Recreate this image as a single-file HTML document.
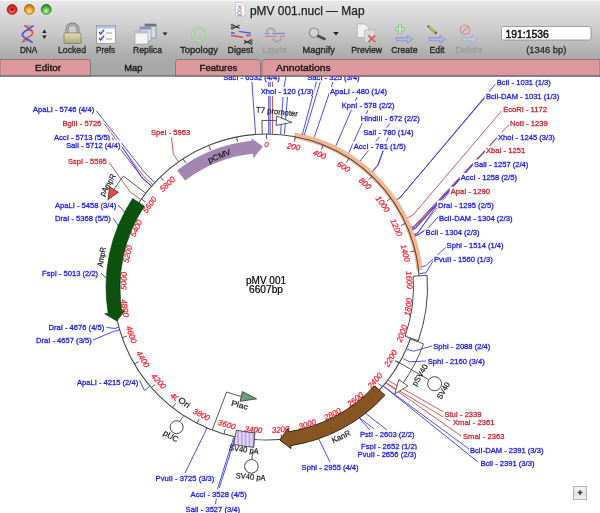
<!DOCTYPE html>
<html><head><meta charset="utf-8">
<style>
html,body{margin:0;padding:0;width:600px;height:513px;overflow:hidden;background:#fff;font-family:"Liberation Sans",sans-serif;}
#map{position:absolute;left:0;top:0;width:600px;height:513px;will-change:transform;}
#chrome{position:absolute;left:0;top:0;width:600px;height:77px;will-change:transform;}
</style></head><body>
<svg id="map" width="600" height="513" viewBox="0 0 600 513" font-family="Liberation Sans, sans-serif">
<path d="M294.32,135.53 A154,154 0 0 1 419.57,270.08" fill="none" stroke="#f8b68e" stroke-width="6"/>
<circle cx="266.5" cy="287" r="153" fill="none" stroke="#4c4c4c" stroke-width="1.1"/>
<line x1="266.5" y1="134" x2="266.5" y2="139" stroke="#444" stroke-width="0.9"/>
<line x1="295.43" y1="136.76" x2="294.48" y2="141.67" stroke="#444" stroke-width="0.9"/>
<line x1="323.31" y1="144.94" x2="321.45" y2="149.58" stroke="#444" stroke-width="0.9"/>
<line x1="349.14" y1="158.24" x2="346.44" y2="162.45" stroke="#444" stroke-width="0.9"/>
<line x1="371.99" y1="176.18" x2="368.55" y2="179.8" stroke="#444" stroke-width="0.9"/>
<line x1="391.04" y1="198.13" x2="386.97" y2="201.03" stroke="#444" stroke-width="0.9"/>
<line x1="405.6" y1="223.27" x2="401.05" y2="225.36" stroke="#444" stroke-width="0.9"/>
<line x1="415.14" y1="250.72" x2="410.28" y2="251.9" stroke="#444" stroke-width="0.9"/>
<line x1="419.31" y1="279.47" x2="414.32" y2="279.72" stroke="#444" stroke-width="0.9"/>
<line x1="417.98" y1="308.5" x2="413.03" y2="307.8" stroke="#444" stroke-width="0.9"/>
<line x1="411.19" y1="336.75" x2="406.46" y2="335.12" stroke="#444" stroke-width="0.9"/>
<line x1="399.17" y1="363.21" x2="394.84" y2="360.72" stroke="#444" stroke-width="0.9"/>
<line x1="382.37" y1="386.91" x2="378.59" y2="383.65" stroke="#444" stroke-width="0.9"/>
<line x1="361.39" y1="407.02" x2="358.29" y2="403.1" stroke="#444" stroke-width="0.9"/>
<line x1="336.99" y1="422.79" x2="334.69" y2="418.36" stroke="#444" stroke-width="0.9"/>
<line x1="310.05" y1="433.67" x2="308.63" y2="428.88" stroke="#444" stroke-width="0.9"/>
<line x1="281.54" y1="439.26" x2="281.04" y2="434.28" stroke="#444" stroke-width="0.9"/>
<line x1="252.48" y1="439.36" x2="252.94" y2="434.38" stroke="#444" stroke-width="0.9"/>
<line x1="223.93" y1="433.96" x2="225.32" y2="429.16" stroke="#444" stroke-width="0.9"/>
<line x1="196.91" y1="423.26" x2="199.19" y2="418.81" stroke="#444" stroke-width="0.9"/>
<line x1="172.41" y1="407.65" x2="175.48" y2="403.7" stroke="#444" stroke-width="0.9"/>
<line x1="151.3" y1="387.68" x2="155.06" y2="384.39" stroke="#444" stroke-width="0.9"/>
<line x1="134.34" y1="364.09" x2="138.66" y2="361.57" stroke="#444" stroke-width="0.9"/>
<line x1="122.15" y1="337.71" x2="126.87" y2="336.05" stroke="#444" stroke-width="0.9"/>
<line x1="115.16" y1="309.51" x2="120.11" y2="308.77" stroke="#444" stroke-width="0.9"/>
<line x1="113.64" y1="280.49" x2="118.63" y2="280.7" stroke="#444" stroke-width="0.9"/>
<line x1="117.63" y1="251.71" x2="122.49" y2="252.86" stroke="#444" stroke-width="0.9"/>
<line x1="126.98" y1="224.2" x2="131.54" y2="226.25" stroke="#444" stroke-width="0.9"/>
<line x1="141.37" y1="198.96" x2="145.46" y2="201.83" stroke="#444" stroke-width="0.9"/>
<line x1="160.27" y1="176.89" x2="163.74" y2="180.49" stroke="#444" stroke-width="0.9"/>
<line x1="183" y1="158.79" x2="185.73" y2="162.98" stroke="#444" stroke-width="0.9"/>
<line x1="208.75" y1="145.32" x2="210.64" y2="149.95" stroke="#444" stroke-width="0.9"/>
<line x1="236.58" y1="136.95" x2="237.55" y2="141.86" stroke="#444" stroke-width="0.9"/>
<text transform="translate(266.5 144) rotate(0)" y="2.9" font-size="8" fill="#ff1428" text-anchor="middle" font-style="italic" stroke="#ff1428" stroke-width="0.22">0</text>
<text transform="translate(293.53 146.58) rotate(10.9)" y="2.9" font-size="8" fill="#ff1428" text-anchor="middle" font-style="italic" stroke="#ff1428" stroke-width="0.22">200</text>
<text transform="translate(319.59 154.22) rotate(21.8)" y="2.9" font-size="8" fill="#ff1428" text-anchor="middle" font-style="italic" stroke="#ff1428" stroke-width="0.22">400</text>
<text transform="translate(343.74 166.65) rotate(32.69)" y="2.9" font-size="8" fill="#ff1428" text-anchor="middle" font-style="italic" stroke="#ff1428" stroke-width="0.22">600</text>
<text transform="translate(365.1 183.43) rotate(43.59)" y="2.9" font-size="8" fill="#ff1428" text-anchor="middle" font-style="italic" stroke="#ff1428" stroke-width="0.22">800</text>
<text transform="translate(382.9 203.93) rotate(54.49)" y="2.9" font-size="8" fill="#ff1428" text-anchor="middle" font-style="italic" stroke="#ff1428" stroke-width="0.22">1000</text>
<text transform="translate(396.51 227.44) rotate(65.39)" y="2.9" font-size="8" fill="#ff1428" text-anchor="middle" font-style="italic" stroke="#ff1428" stroke-width="0.22">1200</text>
<text transform="translate(405.42 253.09) rotate(76.28)" y="2.9" font-size="8" fill="#ff1428" text-anchor="middle" font-style="italic" stroke="#ff1428" stroke-width="0.22">1400</text>
<text transform="translate(409.33 279.97) rotate(87.18)" y="2.9" font-size="8" fill="#ff1428" text-anchor="middle" font-style="italic" stroke="#ff1428" stroke-width="0.22">1600</text>
<text transform="translate(408.08 307.09) rotate(-81.92)" y="2.9" font-size="8" fill="#ff1428" text-anchor="middle" font-style="italic" stroke="#ff1428" stroke-width="0.22">1800</text>
<text transform="translate(401.73 333.5) rotate(-71.02)" y="2.9" font-size="8" fill="#ff1428" text-anchor="middle" font-style="italic" stroke="#ff1428" stroke-width="0.22">2000</text>
<text transform="translate(390.5 358.23) rotate(-60.13)" y="2.9" font-size="8" fill="#ff1428" text-anchor="middle" font-style="italic" stroke="#ff1428" stroke-width="0.22">2200</text>
<text transform="translate(374.8 380.38) rotate(-49.23)" y="2.9" font-size="8" fill="#ff1428" text-anchor="middle" font-style="italic" stroke="#ff1428" stroke-width="0.22">2400</text>
<text transform="translate(355.19 399.17) rotate(-38.33)" y="2.9" font-size="8" fill="#ff1428" text-anchor="middle" font-style="italic" stroke="#ff1428" stroke-width="0.22">2600</text>
<text transform="translate(332.39 413.92) rotate(-27.43)" y="2.9" font-size="8" fill="#ff1428" text-anchor="middle" font-style="italic" stroke="#ff1428" stroke-width="0.22">2800</text>
<text transform="translate(307.2 424.08) rotate(-16.54)" y="2.9" font-size="8" fill="#ff1428" text-anchor="middle" font-style="italic" stroke="#ff1428" stroke-width="0.22">3000</text>
<text transform="translate(280.55 429.31) rotate(-5.64)" y="2.9" font-size="8" fill="#ff1428" text-anchor="middle" font-style="italic" stroke="#ff1428" stroke-width="0.22">3200</text>
<text transform="translate(253.4 429.4) rotate(5.26)" y="2.9" font-size="8" fill="#ff1428" text-anchor="middle" font-style="italic" stroke="#ff1428" stroke-width="0.22">3400</text>
<text transform="translate(226.71 424.35) rotate(16.16)" y="2.9" font-size="8" fill="#ff1428" text-anchor="middle" font-style="italic" stroke="#ff1428" stroke-width="0.22">3600</text>
<text transform="translate(201.46 414.35) rotate(27.05)" y="2.9" font-size="8" fill="#ff1428" text-anchor="middle" font-style="italic" stroke="#ff1428" stroke-width="0.22">3800</text>
<text transform="translate(178.56 399.76) rotate(37.95)" y="2.9" font-size="8" fill="#ff1428" text-anchor="middle" font-style="italic" stroke="#ff1428" stroke-width="0.22">4000</text>
<text transform="translate(158.83 381.1) rotate(48.85)" y="2.9" font-size="8" fill="#ff1428" text-anchor="middle" font-style="italic" stroke="#ff1428" stroke-width="0.22">4200</text>
<text transform="translate(142.98 359.05) rotate(59.75)" y="2.9" font-size="8" fill="#ff1428" text-anchor="middle" font-style="italic" stroke="#ff1428" stroke-width="0.22">4400</text>
<text transform="translate(131.58 334.4) rotate(70.64)" y="2.9" font-size="8" fill="#ff1428" text-anchor="middle" font-style="italic" stroke="#ff1428" stroke-width="0.22">4600</text>
<text transform="translate(125.06 308.04) rotate(81.54)" y="2.9" font-size="8" fill="#ff1428" text-anchor="middle" font-style="italic" stroke="#ff1428" stroke-width="0.22">4800</text>
<text transform="translate(123.63 280.92) rotate(272.44)" y="2.9" font-size="8" fill="#ff1428" text-anchor="middle" font-style="italic" stroke="#ff1428" stroke-width="0.22">5000</text>
<text transform="translate(127.36 254.02) rotate(283.34)" y="2.9" font-size="8" fill="#ff1428" text-anchor="middle" font-style="italic" stroke="#ff1428" stroke-width="0.22">5200</text>
<text transform="translate(136.1 228.31) rotate(294.23)" y="2.9" font-size="8" fill="#ff1428" text-anchor="middle" font-style="italic" stroke="#ff1428" stroke-width="0.22">5400</text>
<text transform="translate(149.55 204.71) rotate(305.13)" y="2.9" font-size="8" fill="#ff1428" text-anchor="middle" font-style="italic" stroke="#ff1428" stroke-width="0.22">5600</text>
<text transform="translate(167.21 184.09) rotate(316.03)" y="2.9" font-size="8" fill="#ff1428" text-anchor="middle" font-style="italic" stroke="#ff1428" stroke-width="0.22">5800</text>
<polyline points="268.7,134 268.7,76" fill="none" stroke="#3a3af0" stroke-width="0.9"/>
<polyline points="270.2,134 270.2,76" fill="none" stroke="#3a3af0" stroke-width="0.9"/>
<polyline points="272.5,134 272.5,76" fill="none" stroke="#d04848" stroke-width="0.9"/>
<polyline points="302.2,135 318,76" fill="none" stroke="#3a3af0" stroke-width="0.9"/>
<polyline points="304.4,135 322,76" fill="none" stroke="#3a3af0" stroke-width="0.9"/>
<polyline points="284.4,134 287.5,97" fill="none" stroke="#3a3af0" stroke-width="0.9"/>
<polyline points="283.5,90 286,76" fill="none" stroke="#3a3af0" stroke-width="0.9"/>
<polyline points="152.79,184.63 143.87,176.6 104,123.5" fill="none" stroke="#d04848" stroke-width="0.9"/>
<polyline points="140.95,199.55 130.29,192.12 109,162.5" fill="none" stroke="#d04848" stroke-width="0.9"/>
<polyline points="178.55,161.81 173.37,154.44 171.5,137.5" fill="none" stroke="#d04848" stroke-width="0.9"/>
<polyline points="387.97,380.03 389.56,381.24 443,411.6" fill="none" stroke="#d04848" stroke-width="0.9"/>
<polyline points="386,382.55 387.56,383.8 450,421" fill="none" stroke="#d04848" stroke-width="0.9"/>
<polyline points="385.82,382.78 387.37,384.03 461,436" fill="none" stroke="#d04848" stroke-width="0.9"/>
<polyline points="414.3,234.05 417.13,233.04 449.5,192" fill="none" stroke="#d04848" stroke-width="0.9"/>
<polyline points="412.24,228.6 415.02,227.49 485,151.5" fill="none" stroke="#d04848" stroke-width="0.9"/>
<polyline points="411.56,226.94 414.33,225.8 509,124.5" fill="none" stroke="#d04848" stroke-width="0.9"/>
<polyline points="407.44,217.83 412.83,215.19 501.5,111" fill="none" stroke="#d04848" stroke-width="0.9"/>
<polyline points="154.76,182.49 146,174.29 96.5,111" fill="none" stroke="#3a3af0" stroke-width="0.9"/>
<polyline points="151.54,186.04 142.52,178.13 112,138" fill="none" stroke="#3a3af0" stroke-width="0.9"/>
<polyline points="151.44,186.15 142.42,178.24 122,146.5" fill="none" stroke="#3a3af0" stroke-width="0.9"/>
<polyline points="126.5,214 118,205" fill="none" stroke="#3a3af0" stroke-width="0.9"/>
<polyline points="119,226.6 113,218" fill="none" stroke="#3a3af0" stroke-width="0.9"/>
<polyline points="106.4,278.5 101,273" fill="none" stroke="#3a3af0" stroke-width="0.9"/>
<polyline points="118.86,327.16 115.97,327.94 116,328.5 106.5,327.5" fill="none" stroke="#3a3af0" stroke-width="0.9"/>
<polyline points="119.61,329.82 115.77,330.94 114.5,331 93,340" fill="none" stroke="#3a3af0" stroke-width="0.9"/>
<polyline points="149.87,386.03 144.54,390.56 139.5,380" fill="none" stroke="#3a3af0" stroke-width="0.9"/>
<polyline points="206.8,427.87 204.85,432.48 185,473" fill="none" stroke="#3a3af0" stroke-width="0.9"/>
<polyline points="235,438 219.3,488" fill="none" stroke="#3a3af0" stroke-width="0.9"/>
<polyline points="233.6,437.7 217.9,487.7 215.5,504" fill="none" stroke="#3a3af0" stroke-width="0.9"/>
<polyline points="318.72,438.77 318.89,439.24 330,462" fill="none" stroke="#3a3af0" stroke-width="0.9"/>
<polyline points="365.69,413.18 365.99,413.58 387,430" fill="none" stroke="#3a3af0" stroke-width="0.9"/>
<polyline points="359.7,417.67 359.99,418.07 374,429" fill="none" stroke="#3a3af0" stroke-width="0.9"/>
<polyline points="359.2,418.02 359.49,418.43 370,430" fill="none" stroke="#3a3af0" stroke-width="0.9"/>
<polyline points="383.22,385.92 384.75,387.21 469,449" fill="none" stroke="#3a3af0" stroke-width="0.9"/>
<polyline points="383.22,385.92 384.75,387.21 478,462" fill="none" stroke="#3a3af0" stroke-width="0.9"/>
<polyline points="406.5,349.2 413.5,351.2 432,346" fill="none" stroke="#3a3af0" stroke-width="0.9"/>
<polyline points="403.4,358.7 409.6,361.8 426,361" fill="none" stroke="#3a3af0" stroke-width="0.9"/>
<polyline points="419.8,273.6 426,272.8 433,261" fill="none" stroke="#3a3af0" stroke-width="0.9"/>
<polyline points="421.8,266.6 425.7,265.8 446,247" fill="none" stroke="#3a3af0" stroke-width="0.9"/>
<polyline points="414.99,236.02 416.88,235.37 424,231" fill="none" stroke="#3a3af0" stroke-width="0.9"/>
<polyline points="414.99,236.02 417.83,235.05 429,227 438,217" fill="none" stroke="#3a3af0" stroke-width="0.9"/>
<polyline points="414.55,234.75 417.38,233.75 437,205" fill="none" stroke="#3a3af0" stroke-width="0.9"/>
<polyline points="412.62,229.58 415.41,228.48 460,178.5" fill="none" stroke="#3a3af0" stroke-width="0.9"/>
<polyline points="412.57,229.44 415.36,228.34 473,165" fill="none" stroke="#3a3af0" stroke-width="0.9"/>
<polyline points="411.9,227.77 414.68,226.64 497,138" fill="none" stroke="#3a3af0" stroke-width="0.9"/>
<polyline points="396.93,199.61 400.25,197.38 484.5,98" fill="none" stroke="#3a3af0" stroke-width="0.9"/>
<polyline points="396.93,199.61 400.25,197.38 495.5,84" fill="none" stroke="#3a3af0" stroke-width="0.9"/>
<polyline points="372.68,171.35 373.35,170.61 378,165 383,151" fill="none" stroke="#3a3af0" stroke-width="0.9"/>
<polyline points="372.57,171.25 373.24,170.51 378,165 388,137.5" fill="none" stroke="#3a3af0" stroke-width="0.9"/>
<polyline points="360.14,160.98 360.74,160.18 390,123.5" fill="none" stroke="#3a3af0" stroke-width="0.9"/>
<polyline points="348.52,153.13 349.04,152.27 368,110" fill="none" stroke="#3a3af0" stroke-width="0.9"/>
<polyline points="335.7,146.07 336.14,145.18 357,97" fill="none" stroke="#3a3af0" stroke-width="0.9"/>
<polyline points="314.26,137.44 314.56,136.49 333,82" fill="none" stroke="#3a3af0" stroke-width="0.9"/>
<polyline points="280.6,134.2 283,97" fill="none" stroke="#3a3af0" stroke-width="0.9"/>
<polyline points="255.6,134.39 255.45,132.39 251.9,82" fill="none" stroke="#3a3af0" stroke-width="0.9"/>
<path d="M177.15,170.27 A147,147 0 0 1 251.72,140.75 L251.47,138.26 L262.89,146.55 L253.48,158.16 L253.03,153.68 A134,134 0 0 0 185.05,180.6 Z" fill="#a486b2"/>
<path d="M132.66,198.42 A160.5,160.5 0 0 0 108.16,313.26 L104.71,313.84 L116.83,321.06 L124.93,310.48 L121.97,310.97 A146.5,146.5 0 0 1 144.33,206.15 Z" fill="#0b520e" stroke="#063806" stroke-width="0.6"/>
<path d="M385.01,395.24 A160.5,160.5 0 0 1 290.59,445.68 L291.04,448.65 L279.69,439.93 L287.96,428.38 L288.49,431.84 A146.5,146.5 0 0 0 374.68,385.79 Z" fill="#875524" stroke="#2a1a08" stroke-width="0.9"/>
<path d="M427.07,275.26 A161,161 0 0 1 418.25,340.8 L405.05,336.12 A147,147 0 0 0 413.11,276.28 Z" fill="#fff" stroke="#333" stroke-width="0.9"/>
<defs><pattern id="stripes" patternUnits="userSpaceOnUse" x="237" y="0" width="3.8" height="10"><rect width="3.8" height="10" fill="#ddd2f8"/><rect x="0.6" width="0.9" height="10" fill="#9878d4"/><rect x="2.2" width="1" height="10" fill="#ece6fc"/></pattern></defs>
<path d="M253.74,447.29 A160.8,160.8 0 0 1 233.48,444.37 L236.45,430.18 A146.3,146.3 0 0 0 254.89,432.84 Z" fill="url(#stripes)" stroke="#3a3a3a" stroke-width="0.9"/>
<path d="M262.28,134.06 L261.91,120.46 A166.6,166.6 0 0 1 276.38,120.69" fill="none" stroke="#444" stroke-width="0.9"/>
<polygon points="276.1,125.38 291.84,122.34 276.66,116" fill="#fff" stroke="#333" stroke-width="0.8"/>
<path d="M410.36,339.08 L423.53,343.84 A167,167 0 0 1 403.3,382.79" fill="none" stroke="#444" stroke-width="0.9"/>
<polygon points="398.79,379.63 394.8,393.9 407.8,385.94" fill="#fff" stroke="#333" stroke-width="0.8"/>
<path d="M145.61,193.23 L123.48,176.06 A181,181 0 0 0 114.02,189.48" fill="none" stroke="#444" stroke-width="0.9"/>
<polygon points="118.4,192.28 107.89,199.8 109.64,186.68" fill="#f04848" stroke="#333" stroke-width="0.8"/>
<path d="M212.17,430.03 L226.62,391.98 A112.3,112.3 0 0 0 241.24,396.42" fill="none" stroke="#444" stroke-width="0.9"/>
<polygon points="242.36,391.55 256.6,398.86 240.11,401.29" fill="#6e9c86" stroke="#333" stroke-width="0.8"/>
<line x1="396.4" y1="361" x2="428.5" y2="379.5" stroke="#444" stroke-width="0.9"/>
<circle cx="434.6" cy="383.7" r="7" fill="#fff" stroke="#333" stroke-width="0.9"/>
<line x1="183.5" y1="416.5" x2="179.5" y2="421.5" stroke="#444" stroke-width="0.9"/>
<circle cx="176.6" cy="427.2" r="6.5" fill="#fff" stroke="#333" stroke-width="0.9"/>
<line x1="252.5" y1="452.7" x2="252" y2="459.6" stroke="#444" stroke-width="0.9"/>
<circle cx="251.4" cy="466.4" r="6.8" fill="#fff" stroke="#333" stroke-width="0.9"/>
<text transform="translate(219.2 155.8) rotate(-22)" y="2.88" font-size="8" fill="#1a1a1a" text-anchor="middle" stroke="#1a1a1a" stroke-width="0.2" textLength="24" lengthAdjust="spacingAndGlyphs">pCMV</text>
<text transform="translate(101.4 257) rotate(-80)" y="2.88" font-size="8" fill="#1a1a1a" text-anchor="middle" stroke="#1a1a1a" stroke-width="0.2" textLength="20" lengthAdjust="spacingAndGlyphs">AmpR</text>
<text transform="translate(341 436.5) rotate(-25)" y="2.88" font-size="8" fill="#1a1a1a" text-anchor="middle" stroke="#1a1a1a" stroke-width="0.2" textLength="20" lengthAdjust="spacingAndGlyphs">KanR</text>
<text transform="translate(277 111.5) rotate(6)" y="2.88" font-size="8" fill="#1a1a1a" text-anchor="middle" stroke="#1a1a1a" stroke-width="0.2" textLength="42" lengthAdjust="spacingAndGlyphs">T7 promoter</text>
<text transform="translate(107.5 185) rotate(-60)" y="2.88" font-size="8" fill="#1a1a1a" text-anchor="middle" stroke="#1a1a1a" stroke-width="0.2" textLength="24" lengthAdjust="spacingAndGlyphs">pAmpR</text>
<text transform="translate(239.7 404.8) rotate(15)" y="2.88" font-size="8" fill="#1a1a1a" text-anchor="middle" stroke="#1a1a1a" stroke-width="0.2" textLength="17" lengthAdjust="spacingAndGlyphs">Plac</text>
<text transform="translate(419.8 375) rotate(-60)" y="2.88" font-size="8" fill="#1a1a1a" text-anchor="middle" stroke="#1a1a1a" stroke-width="0.2" textLength="24" lengthAdjust="spacingAndGlyphs">pSV40</text>
<text transform="translate(443.2 390.5) rotate(-60)" y="2.88" font-size="8" fill="#1a1a1a" text-anchor="middle" stroke="#1a1a1a" stroke-width="0.2" textLength="18" lengthAdjust="spacingAndGlyphs">SV40</text>
<text transform="translate(171 436) rotate(30)" y="2.88" font-size="8" fill="#1a1a1a" text-anchor="middle" stroke="#1a1a1a" stroke-width="0.2" textLength="16" lengthAdjust="spacingAndGlyphs">pUC</text>
<text transform="translate(243.9 449.3) rotate(8)" y="2.88" font-size="8" fill="#1a1a1a" text-anchor="middle" stroke="#1a1a1a" stroke-width="0.2" textLength="30" lengthAdjust="spacingAndGlyphs">SV40 pA</text>
<text transform="translate(250.7 476.6) rotate(5)" y="2.88" font-size="8" fill="#1a1a1a" text-anchor="middle" stroke="#1a1a1a" stroke-width="0.2" textLength="30" lengthAdjust="spacingAndGlyphs">SV40 pA</text>
<g transform="translate(184.3 402.5) rotate(35)"><rect x="-8" y="-4.2" width="14.5" height="8.4" fill="#fff"/><text y="3" font-size="8.4" fill="#1a1a1a" stroke="#1a1a1a" stroke-width="0.2" text-anchor="middle" textLength="12.5" lengthAdjust="spacingAndGlyphs">Ori</text></g>
<text transform="translate(266 280) rotate(0)" y="3.6" font-size="10" fill="#000" text-anchor="middle" stroke="#000" stroke-width="0.2" textLength="40" lengthAdjust="spacingAndGlyphs">pMV 001</text>
<text transform="translate(266 289.3) rotate(0)" y="3.6" font-size="10" fill="#000" text-anchor="middle" stroke="#000" stroke-width="0.2" textLength="34" lengthAdjust="spacingAndGlyphs">6607bp</text>
<rect x="32" y="105" width="63.17" height="9" fill="#fff"/>
<text x="33" y="112.3" font-size="7.6" fill="#1c1cf4" stroke="#1c1cf4" stroke-width="0.3">ApaLI - 5746 (4/4)</text>
<rect x="61.5" y="118.5" width="40.81" height="9" fill="#fff"/>
<text x="62.5" y="125.8" font-size="7.6" fill="#c82a32" stroke="#c82a32" stroke-width="0.3">BglII - 5726</text>
<rect x="53" y="132.25" width="58.11" height="9" fill="#fff"/>
<text x="54" y="139.55" font-size="7.6" fill="#1c1cf4" stroke="#1c1cf4" stroke-width="0.3">AccI - 5713 (5/5)</text>
<rect x="65" y="140.5" width="56.42" height="9" fill="#fff"/>
<text x="66" y="147.8" font-size="7.6" fill="#1c1cf4" stroke="#1c1cf4" stroke-width="0.3">SalI - 5712 (4/4)</text>
<rect x="67" y="156.5" width="40.81" height="9" fill="#fff"/>
<text x="68" y="163.8" font-size="7.6" fill="#c82a32" stroke="#c82a32" stroke-width="0.3">SspI - 5595</text>
<rect x="150" y="127.2" width="41.23" height="9" fill="#fff"/>
<text x="151" y="134.5" font-size="7.6" fill="#c82a32" stroke="#c82a32" stroke-width="0.3">SpeI - 5963</text>
<rect x="54" y="200.5" width="63.17" height="9" fill="#fff"/>
<text x="55" y="207.8" font-size="7.6" fill="#1c1cf4" stroke="#1c1cf4" stroke-width="0.3">ApaLI - 5458 (3/4)</text>
<rect x="54" y="214" width="57.69" height="9" fill="#fff"/>
<text x="55" y="221.3" font-size="7.6" fill="#1c1cf4" stroke="#1c1cf4" stroke-width="0.3">DraI - 5368 (5/5)</text>
<rect x="41" y="269" width="58.11" height="9" fill="#fff"/>
<text x="42" y="276.3" font-size="7.6" fill="#1c1cf4" stroke="#1c1cf4" stroke-width="0.3">FspI - 5013 (2/2)</text>
<rect x="47.5" y="322.5" width="57.69" height="9" fill="#fff"/>
<text x="48.5" y="329.8" font-size="7.6" fill="#1c1cf4" stroke="#1c1cf4" stroke-width="0.3">DraI - 4676 (4/5)</text>
<rect x="35" y="336" width="57.69" height="9" fill="#fff"/>
<text x="36" y="343.3" font-size="7.6" fill="#1c1cf4" stroke="#1c1cf4" stroke-width="0.3">DraI - 4657 (3/5)</text>
<rect x="76" y="377.5" width="63.17" height="9" fill="#fff"/>
<text x="77" y="384.8" font-size="7.6" fill="#1c1cf4" stroke="#1c1cf4" stroke-width="0.3">ApaLI - 4215 (2/4)</text>
<rect x="154.6" y="473.9" width="60.64" height="9" fill="#fff"/>
<text x="155.6" y="481.2" font-size="7.6" fill="#1c1cf4" stroke="#1c1cf4" stroke-width="0.3">PvuII - 3725 (3/3)</text>
<rect x="189.6" y="489.5" width="58.11" height="9" fill="#fff"/>
<text x="190.6" y="496.8" font-size="7.6" fill="#1c1cf4" stroke="#1c1cf4" stroke-width="0.3">AccI - 3528 (4/5)</text>
<rect x="184.6" y="504.5" width="56.42" height="9" fill="#fff"/>
<text x="185.6" y="511.8" font-size="7.6" fill="#1c1cf4" stroke="#1c1cf4" stroke-width="0.3">SalI - 3527 (3/4)</text>
<rect x="300.6" y="462.5" width="58.95" height="9" fill="#fff"/>
<text x="301.6" y="469.8" font-size="7.6" fill="#1c1cf4" stroke="#1c1cf4" stroke-width="0.3">SphI - 2955 (4/4)</text>
<rect x="359" y="429.9" width="56.42" height="9" fill="#fff"/>
<text x="360" y="437.2" font-size="7.6" fill="#1c1cf4" stroke="#1c1cf4" stroke-width="0.3">PstI - 2603 (2/2)</text>
<rect x="360" y="441.5" width="58.11" height="9" fill="#fff"/>
<text x="361" y="448.8" font-size="7.6" fill="#1c1cf4" stroke="#1c1cf4" stroke-width="0.3">FspI - 2652 (1/2)</text>
<rect x="356.6" y="449.9" width="60.64" height="9" fill="#fff"/>
<text x="357.6" y="457.2" font-size="7.6" fill="#1c1cf4" stroke="#1c1cf4" stroke-width="0.3">PvuII - 2656 (2/3)</text>
<rect x="443.4" y="409.5" width="39.12" height="9" fill="#fff"/>
<text x="444.4" y="416.8" font-size="7.6" fill="#c82a32" stroke="#c82a32" stroke-width="0.3">StuI - 2339</text>
<rect x="452" y="417.9" width="43.34" height="9" fill="#fff"/>
<text x="453" y="425.2" font-size="7.6" fill="#c82a32" stroke="#c82a32" stroke-width="0.3">XmaI - 2361</text>
<rect x="462" y="431.9" width="43.34" height="9" fill="#fff"/>
<text x="463" y="439.2" font-size="7.6" fill="#c82a32" stroke="#c82a32" stroke-width="0.3">SmaI - 2363</text>
<rect x="469" y="445.5" width="75.41" height="9" fill="#fff"/>
<text x="470" y="452.8" font-size="7.6" fill="#1c1cf4" stroke="#1c1cf4" stroke-width="0.3">BclI-DAM - 2391 (3/3)</text>
<rect x="479.4" y="459.1" width="56" height="9" fill="#fff"/>
<text x="480.4" y="466.4" font-size="7.6" fill="#1c1cf4" stroke="#1c1cf4" stroke-width="0.3">BclI - 2391 (3/3)</text>
<rect x="432.3" y="341.2" width="58.95" height="9" fill="#fff"/>
<text x="433.3" y="348.5" font-size="7.6" fill="#1c1cf4" stroke="#1c1cf4" stroke-width="0.3">SphI - 2088 (2/4)</text>
<rect x="426.7" y="356.2" width="58.95" height="9" fill="#fff"/>
<text x="427.7" y="363.5" font-size="7.6" fill="#1c1cf4" stroke="#1c1cf4" stroke-width="0.3">SphI - 2160 (3/4)</text>
<rect x="433" y="255.1" width="60.64" height="9" fill="#fff"/>
<text x="434" y="262.4" font-size="7.6" fill="#1c1cf4" stroke="#1c1cf4" stroke-width="0.3">PvuII - 1560 (1/3)</text>
<rect x="445.6" y="240.9" width="58.95" height="9" fill="#fff"/>
<text x="446.6" y="248.2" font-size="7.6" fill="#1c1cf4" stroke="#1c1cf4" stroke-width="0.3">SphI - 1514 (1/4)</text>
<rect x="424.6" y="227.9" width="56" height="9" fill="#fff"/>
<text x="425.6" y="235.2" font-size="7.6" fill="#1c1cf4" stroke="#1c1cf4" stroke-width="0.3">BclI - 1304 (2/3)</text>
<rect x="438" y="213.9" width="75.41" height="9" fill="#fff"/>
<text x="439" y="221.2" font-size="7.6" fill="#1c1cf4" stroke="#1c1cf4" stroke-width="0.3">BclI-DAM - 1304 (2/3)</text>
<rect x="437" y="200.5" width="57.69" height="9" fill="#fff"/>
<text x="438" y="207.8" font-size="7.6" fill="#1c1cf4" stroke="#1c1cf4" stroke-width="0.3">DraI - 1295 (2/5)</text>
<rect x="449.7" y="186.7" width="41.23" height="9" fill="#fff"/>
<text x="450.7" y="194" font-size="7.6" fill="#c82a32" stroke="#c82a32" stroke-width="0.3">ApaI - 1290</text>
<rect x="459.8" y="173.1" width="58.11" height="9" fill="#fff"/>
<text x="460.8" y="180.4" font-size="7.6" fill="#1c1cf4" stroke="#1c1cf4" stroke-width="0.3">AccI - 1258 (2/5)</text>
<rect x="472.9" y="159.5" width="56.42" height="9" fill="#fff"/>
<text x="473.9" y="166.8" font-size="7.6" fill="#1c1cf4" stroke="#1c1cf4" stroke-width="0.3">SalI - 1257 (2/4)</text>
<rect x="484.9" y="145.9" width="41.23" height="9" fill="#fff"/>
<text x="485.9" y="153.2" font-size="7.6" fill="#c82a32" stroke="#c82a32" stroke-width="0.3">XbaI - 1251</text>
<rect x="496.9" y="132.3" width="58.95" height="9" fill="#fff"/>
<text x="497.9" y="139.6" font-size="7.6" fill="#1c1cf4" stroke="#1c1cf4" stroke-width="0.3">XhoI - 1245 (3/3)</text>
<rect x="509.1" y="118.7" width="39.55" height="9" fill="#fff"/>
<text x="510.1" y="126" font-size="7.6" fill="#c82a32" stroke="#c82a32" stroke-width="0.3">NotI - 1239</text>
<rect x="502.2" y="105.1" width="45.73" height="9" fill="#fff"/>
<text x="503.2" y="112.4" font-size="7.6" fill="#c82a32" stroke="#c82a32" stroke-width="0.3">EcoRI - 1172</text>
<rect x="484.9" y="91.5" width="75.41" height="9" fill="#fff"/>
<text x="485.9" y="98.8" font-size="7.6" fill="#1c1cf4" stroke="#1c1cf4" stroke-width="0.3">BclI-DAM - 1031 (1/3)</text>
<rect x="495.8" y="77.4" width="56" height="9" fill="#fff"/>
<text x="496.8" y="84.7" font-size="7.6" fill="#1c1cf4" stroke="#1c1cf4" stroke-width="0.3">BclI - 1031 (1/3)</text>
<rect x="352.75" y="141.5" width="53.89" height="9" fill="#fff"/>
<text x="353.75" y="148.8" font-size="7.6" fill="#1c1cf4" stroke="#1c1cf4" stroke-width="0.3">AccI - 781 (1/5)</text>
<rect x="362.25" y="127.75" width="52.2" height="9" fill="#fff"/>
<text x="363.25" y="135.05" font-size="7.6" fill="#1c1cf4" stroke="#1c1cf4" stroke-width="0.3">SalI - 780 (1/4)</text>
<rect x="359.75" y="114" width="61.06" height="9" fill="#fff"/>
<text x="360.75" y="121.3" font-size="7.6" fill="#1c1cf4" stroke="#1c1cf4" stroke-width="0.3">HindIII - 672 (2/2)</text>
<rect x="340.75" y="100.75" width="54.73" height="9" fill="#fff"/>
<text x="341.75" y="108.05" font-size="7.6" fill="#1c1cf4" stroke="#1c1cf4" stroke-width="0.3">KpnI - 578 (2/2)</text>
<rect x="329" y="87" width="58.95" height="9" fill="#fff"/>
<text x="330" y="94.3" font-size="7.6" fill="#1c1cf4" stroke="#1c1cf4" stroke-width="0.3">ApaLI - 480 (1/4)</text>
<rect x="306.3" y="72.8" width="54.31" height="9" fill="#fff"/>
<text x="307.3" y="80.1" font-size="7.6" fill="#1c1cf4" stroke="#1c1cf4" stroke-width="0.3">SacI - 325 (3/4)</text>
<rect x="259.7" y="87" width="54.73" height="9" fill="#fff"/>
<text x="260.7" y="94.3" font-size="7.6" fill="#1c1cf4" stroke="#1c1cf4" stroke-width="0.3">XhoI - 120 (1/3)</text>
<rect x="222.3" y="72.8" width="58.53" height="9" fill="#fff"/>
<text x="223.3" y="80.1" font-size="7.6" fill="#1c1cf4" stroke="#1c1cf4" stroke-width="0.3">SacI - 6532 (4/4)</text>
<defs><linearGradient id="btn" x1="0" y1="0" x2="0" y2="1"><stop offset="0" stop-color="#f6f6f6"/><stop offset="0.5" stop-color="#e2e2e2"/><stop offset="1" stop-color="#f0f0f0"/></linearGradient></defs>
<rect x="573.6" y="486.4" width="13" height="13" fill="url(#btn)" stroke="#a8a8a8" stroke-width="0.9"/>
<path d="M580.1,490.3 v4.6 M577.8,492.6 h4.6" stroke="#3a3a3a" stroke-width="1.5"/>
</svg>
<svg id="chrome" width="600" height="77" viewBox="0 0 600 77" font-family="Liberation Sans, sans-serif">
<defs>
<linearGradient id="tb" x1="0" y1="0" x2="0" y2="1">
<stop offset="0" stop-color="#e8e8e8"/><stop offset="0.13" stop-color="#dedede"/><stop offset="0.4" stop-color="#cbcbcb"/><stop offset="0.74" stop-color="#acacac"/><stop offset="1" stop-color="#a4a4a4"/>
</linearGradient>
<radialGradient id="red" cx="0.5" cy="0.6" r="0.6"><stop offset="0" stop-color="#ff9090"/><stop offset="0.55" stop-color="#e82a2a"/><stop offset="1" stop-color="#a01818"/></radialGradient>
<radialGradient id="yel" cx="0.5" cy="0.65" r="0.6"><stop offset="0" stop-color="#ffe8a0"/><stop offset="0.55" stop-color="#f0a020"/><stop offset="1" stop-color="#b06a10"/></radialGradient>
<radialGradient id="grn" cx="0.5" cy="0.65" r="0.6"><stop offset="0" stop-color="#d0f8c0"/><stop offset="0.55" stop-color="#5cbc48"/><stop offset="1" stop-color="#2e7a22"/></radialGradient>
<linearGradient id="lock" x1="0" y1="0" x2="0" y2="1"><stop offset="0" stop-color="#e2dfb8"/><stop offset="1" stop-color="#aaa67a"/></linearGradient>
</defs>
<rect x="0" y="0" width="600" height="76" fill="url(#tb)"/>
<rect x="0" y="0" width="600" height="1" fill="#f6f6f6"/>
<!-- traffic lights -->
<circle cx="12.1" cy="9.5" r="6" fill="#f4f4f4" fill-opacity="0.6"/>
<circle cx="29.3" cy="9.4" r="6" fill="#f4f4f4" fill-opacity="0.6"/>
<circle cx="46.2" cy="9.4" r="6" fill="#f4f4f4" fill-opacity="0.6"/>
<circle cx="12.1" cy="9.5" r="5.1" fill="url(#red)" stroke="#8a1a1a" stroke-width="0.6"/>
<circle cx="12.1" cy="9.5" r="1.5" fill="#a00000"/>
<circle cx="29.3" cy="9.4" r="5.1" fill="url(#yel)" stroke="#946018" stroke-width="0.6"/>
<circle cx="46.2" cy="9.4" r="5.1" fill="url(#grn)" stroke="#306a22" stroke-width="0.6"/>
<!-- title -->
<path d="M235.5,2.5 H242 L245,5.5 V16 H235.5 Z" fill="#f8f8f8" stroke="#aaa" stroke-width="0.5"/>
<path d="M237.5,5 C242,8 242,10 238,12 C236,13.5 239,15 242,15.5" fill="none" stroke="#7080e0" stroke-width="0.9"/>
<path d="M242,5 C238,8 237.5,10 241,12 C243,13.5 240,15 237.5,15.5" fill="none" stroke="#e07070" stroke-width="0.9"/>
<text x="250" y="15" font-size="12" fill="#222" stroke="#222" stroke-width="0.25" textLength="114.5" lengthAdjust="spacingAndGlyphs">pMV 001.nucl — Map</text>
<text x="19.9" y="53.2" font-size="9" fill="#fff" fill-opacity="0.5" textLength="17.5" lengthAdjust="spacingAndGlyphs">DNA</text>
<text x="19.9" y="52.7" font-size="9" fill="#262626" stroke="#262626" stroke-width="0.38" textLength="17.5" lengthAdjust="spacingAndGlyphs">DNA</text>
<text x="58" y="53.2" font-size="9" fill="#fff" fill-opacity="0.5" textLength="28" lengthAdjust="spacingAndGlyphs">Locked</text>
<text x="58" y="52.7" font-size="9" fill="#262626" stroke="#262626" stroke-width="0.38" textLength="28" lengthAdjust="spacingAndGlyphs">Locked</text>
<text x="96" y="53.2" font-size="9" fill="#fff" fill-opacity="0.5" textLength="19" lengthAdjust="spacingAndGlyphs">Prefs</text>
<text x="96" y="52.7" font-size="9" fill="#262626" stroke="#262626" stroke-width="0.38" textLength="19" lengthAdjust="spacingAndGlyphs">Prefs</text>
<text x="133" y="53.2" font-size="9" fill="#fff" fill-opacity="0.5" textLength="29" lengthAdjust="spacingAndGlyphs">Replica</text>
<text x="133" y="52.7" font-size="9" fill="#262626" stroke="#262626" stroke-width="0.38" textLength="29" lengthAdjust="spacingAndGlyphs">Replica</text>
<text x="180" y="53.2" font-size="9" fill="#fff" fill-opacity="0.5" textLength="38" lengthAdjust="spacingAndGlyphs">Topology</text>
<text x="180" y="52.7" font-size="9" fill="#262626" stroke="#262626" stroke-width="0.38" textLength="38" lengthAdjust="spacingAndGlyphs">Topology</text>
<text x="227.4" y="53.2" font-size="9" fill="#fff" fill-opacity="0.5" textLength="25.6" lengthAdjust="spacingAndGlyphs">Digest</text>
<text x="227.4" y="52.7" font-size="9" fill="#262626" stroke="#262626" stroke-width="0.38" textLength="25.6" lengthAdjust="spacingAndGlyphs">Digest</text>
<text x="262.6" y="53.2" font-size="9" fill="#fff" fill-opacity="0.5" textLength="24" lengthAdjust="spacingAndGlyphs">Ligate</text>
<text x="262.6" y="52.7" font-size="9" fill="#9a9a9a" stroke="#9a9a9a" stroke-width="0.38" textLength="24" lengthAdjust="spacingAndGlyphs">Ligate</text>
<text x="302.5" y="53.2" font-size="9" fill="#fff" fill-opacity="0.5" textLength="32.5" lengthAdjust="spacingAndGlyphs">Magnify</text>
<text x="302.5" y="52.7" font-size="9" fill="#262626" stroke="#262626" stroke-width="0.38" textLength="32.5" lengthAdjust="spacingAndGlyphs">Magnify</text>
<text x="351.25" y="53.2" font-size="9" fill="#fff" fill-opacity="0.5" textLength="30.75" lengthAdjust="spacingAndGlyphs">Preview</text>
<text x="351.25" y="52.7" font-size="9" fill="#262626" stroke="#262626" stroke-width="0.38" textLength="30.75" lengthAdjust="spacingAndGlyphs">Preview</text>
<text x="391.25" y="53.2" font-size="9" fill="#fff" fill-opacity="0.5" textLength="26.25" lengthAdjust="spacingAndGlyphs">Create</text>
<text x="391.25" y="52.7" font-size="9" fill="#262626" stroke="#262626" stroke-width="0.38" textLength="26.25" lengthAdjust="spacingAndGlyphs">Create</text>
<text x="429.5" y="53.2" font-size="9" fill="#fff" fill-opacity="0.5" textLength="15" lengthAdjust="spacingAndGlyphs">Edit</text>
<text x="429.5" y="52.7" font-size="9" fill="#262626" stroke="#262626" stroke-width="0.38" textLength="15" lengthAdjust="spacingAndGlyphs">Edit</text>
<text x="455.5" y="53.2" font-size="9" fill="#fff" fill-opacity="0.5" textLength="26.5" lengthAdjust="spacingAndGlyphs">Delete</text>
<text x="455.5" y="52.7" font-size="9" fill="#9a9a9a" stroke="#9a9a9a" stroke-width="0.38" textLength="26.5" lengthAdjust="spacingAndGlyphs">Delete</text>

<!-- DNA icon -->
<path d="M25.5,26 h6 M27,30.5 h5.5 M23.5,39.5 h6 M24,41 h4" stroke="#8a8a8a" stroke-width="1.1"/>
<path d="M24.3,25.3 C29,28.5 34,31 32.5,34 C31,37 23.5,38.5 22.5,42.8" fill="none" stroke="#e04848" stroke-width="1.5"/>
<path d="M33.7,25.5 C29,29 21,32.5 22.5,35.5 C24,38.5 30.5,40.5 32.7,42.8" fill="none" stroke="#4848e0" stroke-width="1.5"/>
<path d="M42.2,33 L44.4,29.6 L46.6,33 Z M42.2,35.5 L46.6,35.5 L44.4,39 Z" fill="#222"/>
<!-- Lock -->
<path d="M67,33 V29.5 A5.5,5.5 0 0 1 78,29.5 V33" fill="none" stroke="#7a7a7a" stroke-width="3"/>
<path d="M67,33 V29.5 A5.5,5.5 0 0 1 78,29.5 V33" fill="none" stroke="#c8c8c8" stroke-width="1.2"/>
<rect x="64" y="33" width="17" height="10.5" rx="1" fill="url(#lock)" stroke="#6c6a4a" stroke-width="0.6"/>
<!-- Prefs -->
<rect x="96.5" y="25.5" width="19" height="18" fill="#f8f8f8" stroke="#777" stroke-width="0.6"/>
<rect x="96.8" y="25.8" width="18.4" height="2.6" fill="#b4c0e4"/>
<rect x="99" y="30.5" width="4.5" height="4" fill="#e4e4e4"/>
<rect x="99" y="36.5" width="4.5" height="4" fill="#e4e4e4"/>
<path d="M99.2,32.2 l1.5,2 l3.5,-4.5 M99.2,38.2 l1.5,2 l3.5,-4.5" fill="none" stroke="#2840b0" stroke-width="1.1"/>
<path d="M106,33 h6 M106,39 h6" stroke="#a0a0a0" stroke-width="1.1"/>
<!-- Replica -->
<rect x="145" y="24" width="11" height="14" fill="#d8d8e4" stroke="#666" stroke-width="0.5"/>
<rect x="145" y="24" width="11" height="2.5" fill="#6a7090"/>
<rect x="140" y="27" width="11" height="14" fill="#e4e4ee" stroke="#777" stroke-width="0.5"/>
<rect x="140" y="27" width="11" height="2.5" fill="#8a90b0"/>
<rect x="135" y="31" width="13" height="13" fill="#f4f4f4" stroke="#888" stroke-width="0.5"/>
<rect x="135" y="31" width="13" height="2.5" fill="#b8c0d8"/>
<path d="M162.5,32.5 h5 l-2.5,3 z" fill="#222"/>
<!-- Topology -->
<circle cx="198.7" cy="34" r="6.5" fill="none" stroke="#8ac880" stroke-width="2"/>
<circle cx="198.7" cy="34" r="6.5" fill="none" stroke="#d4f4cc" stroke-width="0.8"/>
<!-- Digest -->
<path d="M231,33 h3.8 M239,31.4 L250.7,33.2" stroke="#4060e8" stroke-width="1.4" fill="none"/>
<path d="M231,35.5 L243,37.3 M246,35.5 h4.7" stroke="#e04848" stroke-width="1.4" fill="none"/>
<path d="M233,25.2 L239.5,28.2 M233,28.2 L239.5,25.2 M244,40.5 L250.5,43.5 M244,43.5 L250.5,40.5" stroke="#222" stroke-width="1.1"/>
<circle cx="232.2" cy="25.2" r="1" fill="none" stroke="#222" stroke-width="0.8"/><circle cx="232.2" cy="28.2" r="1" fill="none" stroke="#222" stroke-width="0.8"/>
<circle cx="251.3" cy="40.5" r="1" fill="none" stroke="#222" stroke-width="0.8"/><circle cx="251.3" cy="43.5" r="1" fill="none" stroke="#222" stroke-width="0.8"/>
<!-- Ligate -->
<path d="M266.4,32 Q270.8,24.5 275.2,32" fill="none" stroke="#a8a8a8" stroke-width="2"/>
<path d="M272.5,38 Q277,45.5 281.5,38" fill="none" stroke="#a8a8a8" stroke-width="2"/>
<path d="M264.7,33.5 h4.6 M272.3,33.5 h12.7" stroke="#7a90e0" stroke-width="1.3"/>
<path d="M264.7,36.3 h12.3 M279.8,36.3 h5.2" stroke="#e08080" stroke-width="1.3"/>
<!-- Magnify -->
<circle cx="314" cy="32.7" r="4.7" fill="#dcdcdc" fill-opacity="0.5" stroke="#8a8a8a" stroke-width="1.1"/>
<path d="M318.2,36 L324.5,39" stroke="#4a4a4a" stroke-width="2.6" stroke-linecap="round"/>
<path d="M333.3,32 h5.4 l-2.7,3.6 z" fill="#222"/>
<!-- Preview -->
<path d="M357.3,24 h7.5 l3.5,3.5 v10 h-11 z" fill="#f0f0f0" stroke="#999" stroke-width="0.5"/>
<rect x="364.5" y="30" width="10.5" height="12.5" fill="#d8d8d8" stroke="#aaa" stroke-width="0.5"/>
<path d="M368.5,35.5 l6.5,6.5 M375,35.5 l-6.5,6.5" stroke="#d86060" stroke-width="2"/>
<!-- Create -->
<path d="M400,24.5 v9.5 M395.3,29.3 h9.5" stroke="#80b880" stroke-width="3.4"/>
<path d="M400,25 v8.6 M395.8,29.3 h8.6" stroke="#c0e8c0" stroke-width="2"/>
<path d="M396,37.6 h11.5 v-2.2 l5.6,3.8 l-5.6,3.8 v-2.2 h-11.5 z" fill="#b0b4e4" stroke="#7e82b8" stroke-width="0.6"/>
<!-- Edit -->
<path d="M427.8,25.8 L436.5,33.6" stroke="#505050" stroke-width="2.2"/>
<path d="M428.8,26.6 L435.2,32.4" stroke="#f0c860" stroke-width="1.3"/>
<path d="M429.5,37.6 h10.5 v-2.2 l5.6,3.8 l-5.6,3.8 v-2.2 h-10.5 z" fill="#b0b4e4" stroke="#7e82b8" stroke-width="0.6"/>
<!-- Delete -->
<circle cx="465" cy="29.7" r="4.6" fill="#dcc8c8" stroke="#c89898" stroke-width="1.4"/>
<path d="M461.8,32.9 l6.4,-6.4" stroke="#c89898" stroke-width="1.4"/>
<path d="M462,37.6 h10 v-2.2 l5.6,3.8 l-5.6,3.8 v-2.2 h-10 z" fill="#c4c6dc" stroke="#a0a2c0" stroke-width="0.6"/>
<!-- field -->
<rect x="501.5" y="26.5" width="89.5" height="13.5" rx="2" fill="#fff" stroke="#8a8a8a" stroke-width="0.8"/>
<text x="505.5" y="38.3" font-size="11" fill="#111" stroke="#111" stroke-width="0.5" textLength="43.25" lengthAdjust="spacingAndGlyphs">191:1536</text>
<text x="526.25" y="53" font-size="9.5" fill="#2a2a2a" stroke="#2a2a2a" stroke-width="0.3" textLength="40" lengthAdjust="spacingAndGlyphs">(1346 bp)</text>
<!-- tabs -->
<path d="M0,59.5 H87.5 Q90.5,59.5 90.5,62.5 V76 H0 Z" fill="#dc989c" stroke="#6e5a5a" stroke-width="0.6"/>
<path d="M175.5,76 V62.5 Q175.5,59.5 178.5,59.5 H257.5 Q260.5,59.5 260.5,62.5 V76 Z" fill="#dc989c" stroke="#6e5a5a" stroke-width="0.6"/>
<path d="M262,76 V62.5 Q262,59.5 265,59.5 H600 V76 Z" fill="#dc989c" stroke="#6e5a5a" stroke-width="0.6"/>
<text x="35" y="70.9" font-size="9.5" fill="#161616" stroke="#161616" stroke-width="0.35" textLength="26" lengthAdjust="spacingAndGlyphs">Editor</text>
<text x="124.25" y="70.9" font-size="9.5" fill="#161616" stroke="#161616" stroke-width="0.35" textLength="18.25" lengthAdjust="spacingAndGlyphs">Map</text>
<text x="199.6" y="70.9" font-size="9.5" fill="#161616" stroke="#161616" stroke-width="0.35" textLength="37.8" lengthAdjust="spacingAndGlyphs">Features</text>
<text x="276" y="70.9" font-size="9.5" fill="#161616" stroke="#161616" stroke-width="0.35" textLength="54.7" lengthAdjust="spacingAndGlyphs">Annotations</text>
<rect x="0" y="75.6" width="600" height="1" fill="#555"/>
</svg>
</body></html>
